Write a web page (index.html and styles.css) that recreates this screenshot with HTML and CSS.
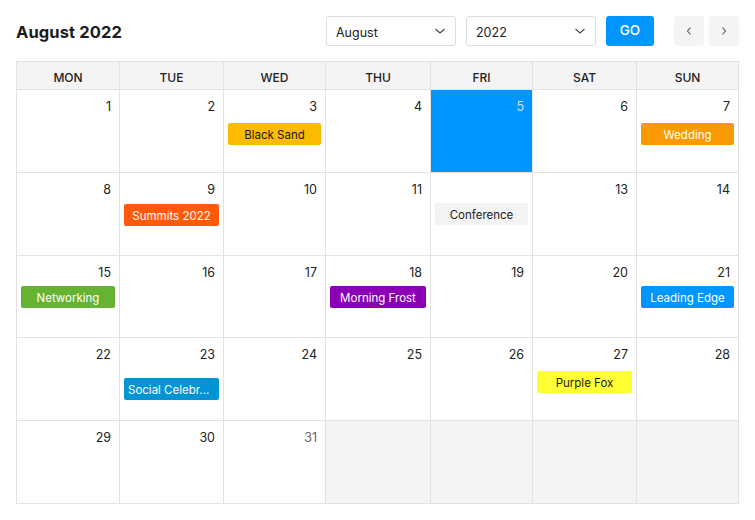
FILE: index.html
```html
<!DOCTYPE html>
<html>
<head>
<meta charset="utf-8">
<link rel="stylesheet" href="styles.css">
</head>
<body>
<div class="app">
  <div class="toolbar">
    <div class="title">August 2022</div>
    <div class="controls">
      <div class="select month"><span>August</span><svg width="12" height="8" viewBox="0 0 12 8"><path d="M1.5 2 L6 6 L10.5 2" fill="none" stroke="#444" stroke-width="1.1"/></svg></div>
      <div class="select year"><span>2022</span><svg width="12" height="8" viewBox="0 0 12 8"><path d="M1.5 2 L6 6 L10.5 2" fill="none" stroke="#444" stroke-width="1.1"/></svg></div>
      <div class="go">GO</div>
      <div class="navs">
        <div class="nav"><svg width="8" height="10" viewBox="0 0 8 10"><path d="M5.5 1.5 L2.5 5 L5.5 8.5" fill="none" stroke="#555" stroke-width="1.1"/></svg></div>
        <div class="nav"><svg width="8" height="10" viewBox="0 0 8 10"><path d="M2.5 1.5 L5.5 5 L2.5 8.5" fill="none" stroke="#555" stroke-width="1.1"/></svg></div>
      </div>
    </div>
  </div>
  <div class="grid">
    <div class="head">MON</div><div class="head">TUE</div><div class="head">WED</div><div class="head">THU</div><div class="head">FRI</div><div class="head">SAT</div><div class="head">SUN</div>

    <div class="cell"><div class="num">1</div></div>
    <div class="cell"><div class="num">2</div></div>
    <div class="cell"><div class="num">3</div><div class="ev ev-yellow">Black Sand</div></div>
    <div class="cell"><div class="num">4</div></div>
    <div class="cell today"><div class="num">5</div></div>
    <div class="cell"><div class="num">6</div></div>
    <div class="cell"><div class="num">7</div><div class="ev ev-orange">Wedding</div></div>

    <div class="cell"><div class="num">8</div></div>
    <div class="cell"><div class="num">9</div><div class="ev ev-red">Summits 2022</div></div>
    <div class="cell"><div class="num">10</div></div>
    <div class="cell"><div class="num">11</div></div>
    <div class="cell"><div class="num"></div><div class="ev ev-gray">Conference</div></div>
    <div class="cell"><div class="num">13</div></div>
    <div class="cell"><div class="num">14</div></div>

    <div class="cell"><div class="num">15</div><div class="ev ev-green tight">Networking</div></div>
    <div class="cell"><div class="num">16</div></div>
    <div class="cell"><div class="num">17</div></div>
    <div class="cell"><div class="num">18</div><div class="ev ev-purple tight">Morning Frost</div></div>
    <div class="cell"><div class="num">19</div></div>
    <div class="cell"><div class="num">20</div></div>
    <div class="cell"><div class="num">21</div><div class="ev ev-blue tight">Leading Edge</div></div>

    <div class="cell"><div class="num">22</div></div>
    <div class="cell"><div class="num">23</div><div class="ev ev-sky low">Social Celebr...</div></div>
    <div class="cell"><div class="num">24</div></div>
    <div class="cell"><div class="num">25</div></div>
    <div class="cell"><div class="num">26</div></div>
    <div class="cell"><div class="num">27</div><div class="ev ev-lemon">Purple Fox</div></div>
    <div class="cell"><div class="num">28</div></div>

    <div class="cell"><div class="num">29</div></div>
    <div class="cell"><div class="num">30</div></div>
    <div class="cell"><div class="num dim">31</div></div>
    <div class="cell empty"></div>
    <div class="cell empty"></div>
    <div class="cell empty"></div>
    <div class="cell empty"></div>
  </div>
</div>
</body>
</html>
```

FILE: styles.css
```css
* { box-sizing: border-box; }
html, body { margin: 0; padding: 0; background: #fff; }
body {
  font-family: "Inter", "Noto Sans", sans-serif;
  color: #222;
}
.app {
  padding: 16px 16px 0 16px;
  width: 755px;
}
.toolbar {
  display: flex;
  align-items: center;
  justify-content: space-between;
  height: 30px;
  margin-bottom: 15px;
}
.title {
  font-size: 16.5px;
  font-weight: 700;
  color: #1c1c1c;
  letter-spacing: 0.1px;
  padding-top: 1px;
}
.controls {
  display: flex;
  align-items: center;
  height: 30px;
}
.select {
  width: 130px;
  height: 30px;
  border: 1px solid #dedede;
  border-radius: 3px;
  display: flex;
  align-items: center;
  justify-content: space-between;
  padding: 2px 9px 0 9px;
  font-size: 12.5px;
  color: #222;
  margin-right: 10px;
}
.select svg { margin-top: -3px; }
.go {
  width: 48px;
  height: 30px;
  background: #0096ff;
  color: #fff;
  border-radius: 3px;
  display: flex;
  align-items: center;
  justify-content: center;
  font-size: 13.5px;
  font-weight: 500;
  margin-right: 20px;
  padding-bottom: 2px;
}
.navs { display: flex; gap: 5px; }
.nav {
  width: 30px;
  height: 30px;
  background: #f4f4f4;
  border-radius: 3px;
  display: flex;
  align-items: center;
  justify-content: center;
}
.grid {
  display: grid;
  grid-template-columns: 103px 104px 102px 105px 102px 104px 102px;
  grid-template-rows: 28px 83px 83px 82px 83px 83px;
  width: 723px;
  border-top: 1px solid #e2e2e2;
  border-left: 1px solid #e2e2e2;
}
.head {
  background: #f4f4f4;
  border-right: 1px solid #e2e2e2;
  border-bottom: 1px solid #e2e2e2;
  display: flex;
  align-items: center;
  justify-content: center;
  font-size: 12px;
  font-weight: 500;
  color: #222;
  padding-top: 3px;
}
.cell {
  border-right: 1px solid #e2e2e2;
  border-bottom: 1px solid #e2e2e2;
  padding: 9px 4px 0 4px;
  display: flex;
  flex-direction: column;
}
.num {
  text-align: right;
  font-size: 12.5px;
  height: 16px;
  line-height: 16px;
  padding-right: 4px;
  color: #222;
}
.num.dim { color: #666; }
.today { background: #0096ff; }
.today .num { color: rgba(255,255,255,0.8); }
.empty { background: #f4f4f4; }
.ev {
  margin-top: 8px;
  height: 22px;
  border-radius: 2px;
  font-size: 11.5px;
  display: flex;
  align-items: center;
  justify-content: center;
  white-space: nowrap;
  overflow: hidden;
  padding: 1px 4px 0 4px;
}
.ev.tight { margin-top: 5px; }
.ev.low { margin-top: 15px; justify-content: flex-start; }
.ev-yellow { background: #fbbb00; color: #1a1a1a; }
.ev-orange { background: #fb9900; color: #fff; }
.ev-red { background: #ff5a0b; color: #fff; margin-top: 6px; }
.ev-gray { background: #f3f3f3; color: #222; margin-top: 5px; }
.ev-green { background: #66b232; color: #fff; }
.ev-purple { background: #8c00b5; color: #fff; }
.ev-blue { background: #0096ff; color: #fff; }
.ev-sky { background: #0094d4; color: #fff; }
.ev-lemon { background: #ffff33; color: #1a1a1a; }
```
